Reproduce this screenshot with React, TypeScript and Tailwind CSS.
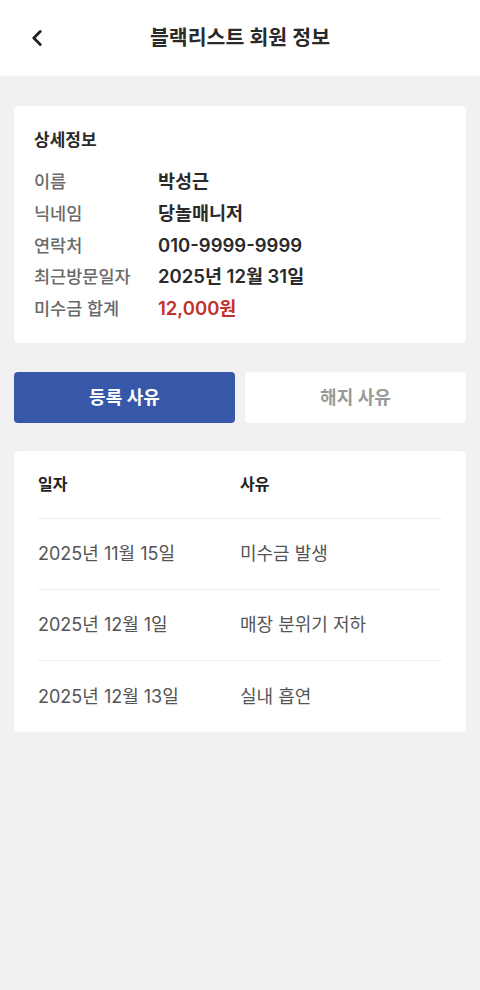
import React, { useState } from 'react';
import { ChevronLeft } from 'lucide-react';

const info = [
  { label: '이름', value: '박성근' },
  { label: '닉네임', value: '당놀매니저' },
  { label: '연락처', value: '010-9999-9999' },
  { label: '최근방문일자', value: '2025년 12월 31일' },
  { label: '미수금 합계', value: '12,000원', red: true },
];

const reasons = [
  { date: '2025년 11월 15일', reason: '미수금 발생' },
  { date: '2025년 12월 1일', reason: '매장 분위기 저하' },
  { date: '2025년 12월 13일', reason: '실내 흡연' },
];

export default function App() {
  const [tab, setTab] = useState<'reg' | 'cancel'>('reg');

  return (
    <div
      className="min-h-[990px] w-[480px] bg-[#f1f1f1]"
      style={{ fontFamily: 'Inter, "Noto Sans CJK KR", "Noto Sans", sans-serif' }}
    >
      <header className="relative flex h-[76px] items-center justify-center bg-white">
        <button className="absolute left-[24px] top-1/2 -translate-y-1/2 text-[#222]">
          <ChevronLeft className="h-[26px] w-[26px]" strokeWidth={2.6} />
        </button>
        <h1 className="text-[20.5px] font-semibold text-[#2a2a2a]">블랙리스트 회원 정보</h1>
      </header>

      <div className="px-[14px] pt-[30px]">
        <section className="rounded-[5px] bg-white px-[20px] pb-[18px] pt-[22px]">
          <h2 className="text-[17px] font-semibold leading-[24px] text-[#2a2a2a]">상세정보</h2>
          <div className="mt-[14px]">
            {info.map((row) => (
              <div key={row.label} className="flex leading-[31.75px]">
                <span className="w-[124px] text-[17.5px] font-medium text-[#6a6a6a]">{row.label}</span>
                <span
                  className={`text-[18.5px] font-semibold ${row.red ? 'text-[#c4302b]' : 'text-[#2a2a2a]'}`}
                >
                  {row.value}
                </span>
              </div>
            ))}
          </div>
        </section>

        <div className="mt-[29px] flex gap-[10px]">
          <button
            onClick={() => setTab('reg')}
            className={`h-[51px] flex-1 rounded-[4px] text-[18px] font-semibold ${
              tab === 'reg' ? 'bg-[#3758a8] text-white' : 'bg-white text-[#9a9a9a]'
            }`}
          >
            등록 사유
          </button>
          <button
            onClick={() => setTab('cancel')}
            className={`h-[51px] flex-1 rounded-[4px] text-[18px] font-semibold ${
              tab === 'cancel' ? 'bg-[#3758a8] text-white' : 'bg-white text-[#9a9a9a]'
            }`}
          >
            해지 사유
          </button>
        </div>

        <section className="mt-[28px] rounded-[5px] bg-white px-[24px]">
          <div className="grid h-[68px] grid-cols-2 items-center border-b border-[#eeeeee] text-[16px] font-bold text-[#222]">
            <span>일자</span>
            <span>사유</span>
          </div>
          {reasons.map((r, i) => (
            <div
              key={r.date}
              className={`grid h-[71px] grid-cols-2 items-center text-[18px] text-[#555] ${
                i < reasons.length - 1 ? 'border-b border-[#eeeeee]' : ''
              }`}
            >
              <span>{r.date}</span>
              <span>{r.reason}</span>
            </div>
          ))}
        </section>
      </div>
    </div>
  );
}
